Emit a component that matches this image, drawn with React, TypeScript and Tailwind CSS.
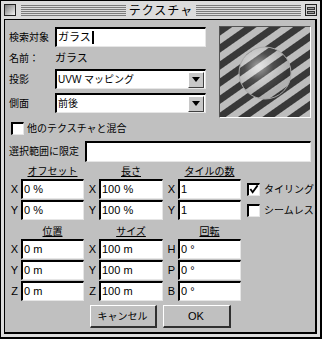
import React from "react";

const sunken =
  "bg-white border-t-2 border-l-2 border-b border-r border-t-black border-l-black border-b-[#e6e6e6] border-r-[#e6e6e6]";

function Field({ label, value, wide }: { label: string; value: string; wide?: boolean }) {
  return (
    <div className="flex items-center h-[20px]">
      <div className="w-[13px] text-center leading-none text-[11px]">{label}</div>
      <div className={`${sunken} h-[20px] ${wide ? "w-[64px]" : "w-[63px]"} flex items-center pl-[1px] leading-none text-[11px] whitespace-nowrap`}>
        {value}
      </div>
    </div>
  );
}

function Header({ text, wide }: { text: string; wide?: boolean }) {
  return (
    <div className="flex">
      <div className="w-[13px]" />
      <div className={`${wide ? "w-[64px]" : "w-[63px]"} text-center leading-[12px] underline underline-offset-[1px] whitespace-nowrap`}>{text}</div>
    </div>
  );
}

function Checkbox({ checked }: { checked?: boolean }) {
  return (
    <div className="shrink-0 w-[13px] h-[13px] bg-white border-t-2 border-l-2 border-b border-r border-t-black border-l-black border-b-[#e6e6e6] border-r-[#e6e6e6] flex items-center justify-center">
      {checked && (
        <svg width="11" height="11" viewBox="0 0 11 11">
          <path d="M1.5 5 L4 8.5 L9.5 1" stroke="#000" strokeWidth="2" fill="none" />
        </svg>
      )}
    </div>
  );
}

function Select({ value }: { value: string }) {
  return (
    <div className={`${sunken} w-[151px] h-[20px] flex items-center`}>
      <div className="flex-1 pl-[1px] leading-none whitespace-nowrap">{value}</div>
      <div className="w-[16px] h-[16px] mr-[1px] bg-[#c8c8c8] border-t border-l border-white border-b border-r border-b-[#404040] border-r-[#404040] flex items-center justify-center">
        <svg width="8" height="5" viewBox="0 0 8 5">
          <path d="M0 0 H8 L4 5 Z" fill="#000" />
        </svg>
      </div>
    </div>
  );
}

function Preview() {
  return (
    <div className="w-[92px] h-[92px] border-t border-l border-b border-r border-t-[#555] border-l-[#555] border-b-white border-r-white">
      <svg width="90" height="90" viewBox="0 0 90 90">
        <defs>
          <pattern id="st" width="14" height="14" patternUnits="userSpaceOnUse" patternTransform="rotate(-35)">
            <rect width="14" height="14" fill="#bdbdbd" />
            <rect width="14" height="7" fill="#383838" />
          </pattern>
          <pattern id="st2" width="14" height="14" patternUnits="userSpaceOnUse" patternTransform="rotate(-35) translate(0 3)">
            <rect width="14" height="14" fill="#c4c4c4" />
            <rect width="14" height="7" fill="#3a3a3a" />
          </pattern>
          <radialGradient id="hl" cx="0.38" cy="0.38" r="0.55">
            <stop offset="0" stopColor="#ffffff" stopOpacity="0.55" />
            <stop offset="0.5" stopColor="#ffffff" stopOpacity="0.1" />
            <stop offset="1" stopColor="#000000" stopOpacity="0.1" />
          </radialGradient>
        </defs>
        <rect width="90" height="90" fill="url(#st)" />
        <circle cx="45" cy="46" r="26" fill="url(#st2)" />
        <circle cx="45" cy="46" r="26" fill="url(#hl)" stroke="#a8a8a8" strokeWidth="1" />
      </svg>
    </div>
  );
}

function Stripes() {
  return <div className="flex-1 h-[11px] bg-[repeating-linear-gradient(#7c7c7c_0_1px,transparent_1px_2px)]" />;
}

export default function App() {
  return (
    <div className="w-[322px] h-[339px] bg-[#dcdcdc] border-t border-l border-r-2 border-b-2 border-black flex flex-col font-['Liberation_Sans','Noto_Sans_CJK_JP',sans-serif] text-[10px] text-black">
      {/* title bar */}
      <div className="h-[18px] flex items-center px-[3px]">
        <div className="w-[12px] h-[12px] border border-[#222] bg-[linear-gradient(135deg,#7a7a7a,#f4f4f4)]" />
        <div className="w-[5px]" />
        <Stripes />
        <div className="px-[3px] text-[12px] leading-none tracking-[1px] font-['Noto_Sans_CJK_JP',sans-serif]">テクスチャ</div>
        <Stripes />
        <div className="w-[4px]" />
        <div className="w-[12px] h-[12px] border border-[#222] bg-[#d0d0d0] flex flex-col justify-center gap-[1px] px-[1px]">
          <div className="h-[3px] border border-[#333] bg-[#9a9a9a]" />
          <div className="h-[3px] border border-[#333] bg-[#9a9a9a]" />
        </div>
      </div>

      {/* content */}
      <div className="mx-[3px] mb-[3px] flex-1 bg-[#c0c0c0] border-t border-l border-r-2 border-b-2 border-black flex flex-col">
        {/* top section */}
        <div className="flex pt-[6px]">
          <div className="pl-[4px] pt-[1px] flex flex-col w-[214px]">
            <div className="flex items-center h-[20px]">
              <div className="w-[46px] whitespace-nowrap">検索対象</div>
              <div className={`${sunken} w-[151px] h-[20px] flex items-center pl-[1px] leading-none text-[11px]`}>
                ガラス<span className="inline-block w-[2px] h-[13px] bg-black ml-[1px]" />
              </div>
            </div>
            <div className="flex items-center h-[22px]">
              <div className="w-[46px]">名前：</div>
              <div className="text-[11px]">ガラス</div>
            </div>
            <div className="flex items-center h-[20px]">
              <div className="w-[46px]">投影</div>
              <Select value="UVW マッピング" />
            </div>
            <div className="flex items-center h-[20px] mt-[4px]">
              <div className="w-[46px]">側面</div>
              <Select value="前後" />
            </div>
          </div>
          <Preview />
        </div>

        {/* checkbox row */}
        <div className="flex items-center h-[20px] pl-[6px] gap-[3px]">
          <Checkbox />
          <div className="whitespace-nowrap">他のテクスチャと混合</div>
        </div>

        {/* select range */}
        <div className="flex items-center h-[22px] mt-[2px] pl-[4px]">
          <div className="w-[76px] whitespace-nowrap">選択範囲に限定</div>
          <div className={`${sunken} w-[226px] h-[21px]`} />
        </div>

        {/* section 1 */}
        <div className="flex pl-[3px] gap-[2px] mt-[2px] h-[14px] items-end">
          <Header text="オフセット" />
          <Header text="長さ" wide />
          <Header text="タイルの数" />
        </div>
        <div className="flex pl-[3px] gap-[2px] mt-[1px]">
          <div className="flex flex-col gap-[1px]">
            <Field label="X" value="0 %" />
            <Field label="Y" value="0 %" />
          </div>
          <div className="flex flex-col gap-[1px]">
            <Field label="X" value="100 %" wide />
            <Field label="Y" value="100 %" wide />
          </div>
          <div className="flex flex-col gap-[1px]">
            <Field label="X" value="1" />
            <Field label="Y" value="1" />
          </div>
          <div className="flex flex-col gap-[1px] ml-[4px]">
            <div className="flex items-center h-[20px] gap-[4px]">
              <Checkbox checked />
              <div className="whitespace-nowrap">タイリング</div>
            </div>
            <div className="flex items-center h-[20px] gap-[4px]">
              <Checkbox />
              <div className="whitespace-nowrap">シームレス</div>
            </div>
          </div>
        </div>

        {/* section 2 */}
        <div className="flex pl-[3px] gap-[2px] h-[18px] items-end">
          <Header text="位置" />
          <Header text="サイズ" wide />
          <Header text="回転" />
        </div>
        <div className="flex pl-[3px] gap-[2px] mt-[1px]">
          <div className="flex flex-col gap-[1px]">
            <Field label="X" value="0 m" />
            <Field label="Y" value="0 m" />
            <Field label="Z" value="0 m" />
          </div>
          <div className="flex flex-col gap-[1px]">
            <Field label="X" value="100 m" wide />
            <Field label="Y" value="100 m" wide />
            <Field label="Z" value="100 m" wide />
          </div>
          <div className="flex flex-col gap-[1px]">
            <Field label="H" value="0 °" />
            <Field label="P" value="0 °" />
            <Field label="B" value="0 °" />
          </div>
        </div>

        {/* buttons */}
        <div className="flex justify-center gap-[6px] mt-[4px]">
          <button className="w-[67px] h-[23px] bg-[#c0c0c0] border-t border-l border-b-2 border-r-2 border-t-white border-l-white border-b-[#303030] border-r-[#303030] flex items-center justify-center">
            キャンセル
          </button>
          <button className="w-[68px] h-[23px] bg-[#c0c0c0] border-t border-l border-b-2 border-r-2 border-t-white border-l-white border-b-[#303030] border-r-[#303030] flex items-center justify-center text-[11px]">
            OK
          </button>
        </div>
      </div>
    </div>
  );
}
